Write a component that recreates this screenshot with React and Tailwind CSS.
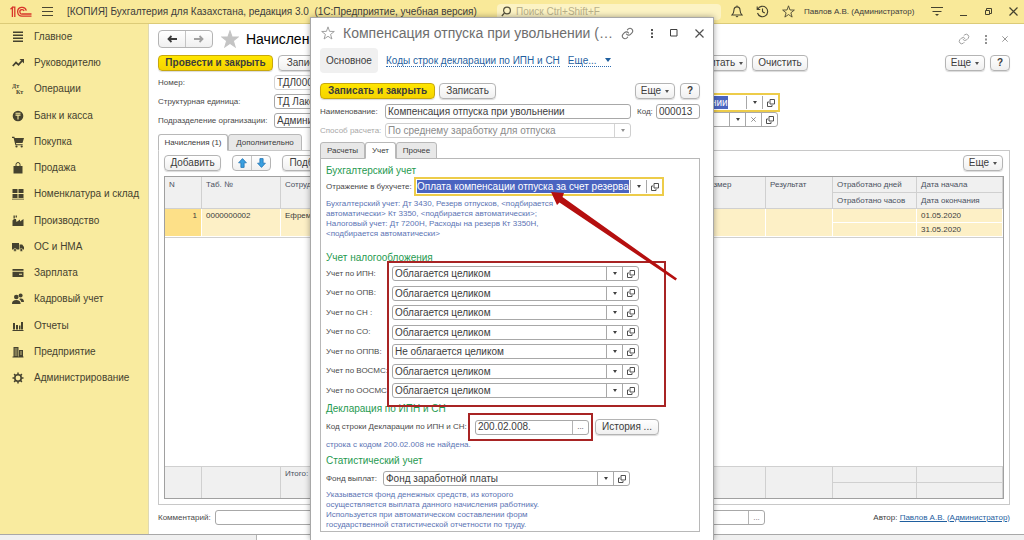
import React from "react";
import clsx from "clsx";

const MENU = [
  { label: "Главное", icon: "lines" },
  { label: "Руководителю", icon: "trend" },
  { label: "Операции", icon: "dtkt" },
  { label: "Банк и касса", icon: "coin" },
  { label: "Покупка", icon: "cart" },
  { label: "Продажа", icon: "bag" },
  { label: "Номенклатура и склад", icon: "blocks" },
  { label: "Производство", icon: "factory" },
  { label: "ОС и НМА", icon: "truck" },
  { label: "Зарплата", icon: "card" },
  { label: "Кадровый учет", icon: "people" },
  { label: "Отчеты", icon: "bars" },
  { label: "Предприятие", icon: "building" },
  { label: "Администрирование", icon: "gear" },
];

const TAXES = [
  { id: "ipn", label: "Учет по ИПН:", value: "Облагается целиком" },
  { id: "opv", label: "Учет по ОПВ:", value: "Облагается целиком" },
  { id: "sn", label: "Учет по СН :", value: "Облагается целиком" },
  { id: "so", label: "Учет по СО:", value: "Облагается целиком" },
  { id: "oppv", label: "Учет по ОППВ:", value: "Не облагается целиком" },
  { id: "vosmc", label: "Учет по ВОСМС:", value: "Облагается целиком" },
  { id: "oosmc", label: "Учет по ООСМС:", value: "Облагается целиком" },
];

export default function App() {
  return (
    <div className="relative flex h-screen flex-col overflow-hidden bg-white font-['Liberation_Sans',Arial,sans-serif] text-[10px] leading-3 text-[#3c3c3c]">
      <Header />
      <div className="flex min-h-0 flex-1">
        <Sidebar />
        <DocumentForm />
      </div>
      <div className="flex h-[6px] shrink-0 border-t border-[#a8a8a8] bg-[#f0f0f0]">
        <div className="ml-[256px] w-40 border-x border-[#b4b4b4] bg-white" />
      </div>
      <CalculationDialog />
    </div>
  );
}

function Header() {
  return (
    <header className="flex h-6 shrink-0 items-center border-b border-[#dccb78] bg-[#f9e999] pl-[10px] pr-[6px]">
      <Logo />
      <button type="button" aria-label="Меню" className="ml-[10px]">
        <svg width="12" height="10" viewBox="0 0 12 10" stroke="#4a4632" strokeWidth="1">
          <path d="M0 .5h11M0 4.500h11M0 8.500h11" />
        </svg>
      </button>
      <div className="ml-[13px] whitespace-pre">
        [КОПИЯ] Бухгалтерия для Казахстана, редакция 3.0{"  "}(1С:Предприятие, учебная версия)
      </div>
      <div className="ml-auto flex h-4 w-[224px] items-center gap-1 rounded-sm bg-[#fcf3c4] px-1">
        <svg width="11" height="11" viewBox="0 0 11 11" fill="none" stroke="#55513c" strokeWidth="1.2">
          <circle cx="6" cy="4.5" r="3.4" />
          <path d="M3.5 7 .8 10" />
        </svg>
        <input
          aria-label="Поиск"
          placeholder="Поиск Ctrl+Shift+F"
          className="min-w-0 flex-1 bg-transparent outline-none placeholder:text-[#b9b08a]"
        />
      </div>
      <div className="ml-[10px] flex items-center gap-[13px] text-[#45422f]">
        <button type="button" aria-label="Уведомления"><BellIcon /></button>
        <button type="button" aria-label="История"><HistoryIcon /></button>
        <button type="button" aria-label="Избранное"><StarIcon size={13} color="#45422f" /></button>
      </div>
      <div className="ml-[9px] w-[118px] whitespace-nowrap text-[8px]">Павлов А.В. (Администратор)</div>
      <div className="ml-[9px] flex items-center">
        <button type="button" aria-label="Настройки" className="mr-6">
          <svg width="12" height="11" viewBox="0 0 12 11" stroke="#45422f">
            <path d="M0 1.5h12M1.5 5.5h9" />
            <path d="M4 8h4L6 10z" fill="#45422f" stroke="none" />
          </svg>
        </button>
        <WindowButtons />
      </div>
    </header>
  );
}

function WindowButtons() {
  return (
    <div className="-ml-2 flex items-center gap-4">
      <button type="button" aria-label="Свернуть">
        <svg width="9" height="9" viewBox="0 0 9 9" stroke="#45422f"><path d="M1 8.5h7" /></svg>
      </button>
      <button type="button" aria-label="Восстановить">
        <svg width="9" height="9" viewBox="0 0 9 9" fill="none" stroke="#45422f">
          <path d="M2.500 3V1.500h5v5H6" />
          <path d="M1.500 3.500h4v4h-4z" />
        </svg>
      </button>
      <button type="button" aria-label="Закрыть">
        <CloseIcon size={9} color="#45422f" />
      </button>
    </div>
  );
}

function Sidebar() {
  return (
    <nav className="w-[149px] shrink-0 border-r border-[#dfd9b4] bg-[#f9eb9f]">
      {MENU.map((item, i) => (
        <a
          key={item.label}
          href="#"
          className={clsx("flex items-center gap-[10px] pl-3 text-[#45422f]", i % 4 === 3 ? "h-[27px]" : "h-[26px]")}
        >
          <MenuIcon name={item.icon} />
          {item.label}
        </a>
      ))}
    </nav>
  );
}

function DocumentForm() {
  return (
    <main className="flex min-w-0 flex-1 flex-col pl-[9px] pr-[14px] pt-[6px]">
      <div className="flex h-[18px] items-center">
        <div className="flex h-[18px] w-[55px] divide-x divide-[#c4c4c4] rounded-sm border border-[#b4b4b4] bg-linear-to-b from-white to-[#f0f0f0]">
          <button type="button" aria-label="Назад" className="flex flex-1 items-center justify-center">
            <ArrowIcon color="#3c3c3c" />
          </button>
          <button type="button" aria-label="Вперед" className="flex flex-1 items-center justify-center">
            <ArrowIcon color="#a0a0a0" flip />
          </button>
        </div>
        <button type="button" aria-label="В избранное" className="ml-2">
          <StarIcon size={18} color="#c4c4c4" fill="#c4c4c4" />
        </button>
        <h1 className="ml-[7px] whitespace-nowrap text-[14px] leading-4 text-black">Начисление</h1>
        <div className="ml-auto flex items-center gap-[15px] pr-[2px]">
          <button type="button" aria-label="Ссылка"><LinkIcon size={12} color="#a0a0a0" /></button>
          <button type="button" aria-label="Меню окна"><DotsIcon color="#909090" /></button>
          <button type="button" aria-label="Закрыть"><CloseIcon size={6} color="#808080" /></button>
        </div>
      </div>

      <div className="mt-[7px] flex justify-between">
        <div className="flex gap-[5px]">
          <Button primary className="w-[115px]">Провести и закрыть</Button>
          <Button className="w-[60px]">Записать</Button>
        </div>
        <div className="flex">
          <div className="mr-[137px] flex gap-[5px]">
            <Button menu className="w-[68px]">Рассчитать</Button>
            <Button className="w-[56px]">Очистить</Button>
          </div>
          <Button menu className="w-10">Еще</Button>
          <Button className="ml-[5px] w-5 font-bold">?</Button>
        </div>
      </div>

      <div className="mt-1 flex justify-between">
        <div className="flex flex-col gap-1">
          <Field id="number" label="Номер:" labelWidth="w-[116px]">
            <TextBox id="number" value="ТДЛ000001" className="w-[120px]" light />
          </Field>
          <Field id="unit" label="Структурная единица:" labelWidth="w-[116px]">
            <TextBox id="unit" value="ТД Лакомка" className="w-[180px]" />
          </Field>
          <Field id="dept" label="Подразделение организации:" labelWidth="w-[116px]">
            <TextBox id="dept" value="Администрация" className="w-[180px]" />
          </Field>
        </div>
        <div className="mr-[230px] mt-[18px] flex w-[129px] flex-col items-start">
          <ComboBox id="account" aria="Отражение в бухучете" value="при увольнении" selected className="w-full" />
          <ComboBox id="fund" aria="Вид" value="" clear className="w-[127px]" />
        </div>
      </div>

      <div className="mt-[6px] flex">
        <Tab active className="w-[70px]">Начисления (1)</Tab>
        <Tab className="w-[74px]">Дополнительно</Tab>
      </div>
      <section className="-mt-px flex min-h-0 flex-1 flex-col border border-[#c8c8c8] px-[5px] pb-[5px] pt-1">
        <div className="mb-[5px] flex justify-between pr-px">
          <div className="flex gap-[11px]">
            <Button className="w-[57px]">Добавить</Button>
            <div className="flex h-4 w-[39px] divide-x divide-[#c4c4c4] rounded-sm border border-[#b4b4b4] bg-linear-to-b from-white to-[#f0f0f0]">
              <button type="button" aria-label="Вверх" className="flex flex-1 items-center justify-center"><BlueArrow /></button>
              <button type="button" aria-label="Вниз" className="flex flex-1 items-center justify-center"><BlueArrow down /></button>
            </div>
            <Button className="w-[50px]">Подбор</Button>
          </div>
          <Button menu className="w-10">Еще</Button>
        </div>
        <AccrualTable />
      </section>

      <div className="flex h-[26px] shrink-0 items-center pb-px text-[8px]">
        <label htmlFor="comment" className="w-[57px] text-[#4a4a4a]">Комментарий:</label>
        <div className="flex h-[15px] w-[550px] rounded-[3px] border border-[#a8a8a8] bg-white">
          <input id="comment" className="min-w-0 flex-1 bg-transparent px-1 outline-none" />
          <button type="button" aria-label="Выбрать" className="w-4 border-l border-[#b4b4b4] text-[#707070]">...</button>
        </div>
        <div className="ml-auto whitespace-nowrap">
          Автор: <a href="#" className="text-[#1f5f9f] underline">Павлов А.В. (Администратор)</a>
        </div>
      </div>
      <div className="h-[3px] shrink-0" />
    </main>
  );
}

function AccrualTable() {
  const th = "border-r border-b border-[#d0d0d0] px-1 pt-[1px] text-left align-top font-normal text-[#4a5060]";
  const td = "border-r border-b border-white px-1 align-top";
  const tf = "border-r border-[#d0d0d0] px-1 align-top";
  return (
    <div className="min-h-0 flex-1 border border-[#a0a0a0]">
      <table className="h-full w-full table-fixed border-separate border-spacing-0 text-[8px] leading-[13px]">
        <colgroup>
          <col className="w-[37px]" />
          <col className="w-[79px]" />
          <col />
          <col className="w-[66px]" />
          <col className="w-[67px]" />
          <col className="w-[84px]" />
          <col className="w-[86px]" />
        </colgroup>
        <thead className="bg-[#f0f0f0]">
          <tr className="h-4">
            <th rowSpan={2} className={th}>N</th>
            <th rowSpan={2} className={th}>Таб. №</th>
            <th rowSpan={2} className={th}>Сотрудник</th>
            <th rowSpan={2} className={th}>Размер</th>
            <th rowSpan={2} className={th}>Результат</th>
            <th className={th}>Отработано дней</th>
            <th className={th}>Дата начала</th>
          </tr>
          <tr className="h-4">
            <th className={th}>Отработано часов</th>
            <th className={th}>Дата окончания</th>
          </tr>
        </thead>
        <tbody>
          <tr className="h-[14px] bg-[#fdf0c6]">
            <td rowSpan={2} className={clsx(td, "bg-[#fde088] text-right")}>1</td>
            <td rowSpan={2} className={td}>0000000002</td>
            <td rowSpan={2} className={td}>Ефремов</td>
            <td rowSpan={2} className={td} />
            <td rowSpan={2} className={td} />
            <td className={td} />
            <td className={td}>01.05.2020</td>
          </tr>
          <tr className="h-[14px] bg-[#fdf0c6]">
            <td className={td} />
            <td className={td}>31.05.2020</td>
          </tr>
          <tr>
            <td colSpan={7} className="border-y border-[#d0d0d0] bg-white" />
          </tr>
        </tbody>
        <tfoot className="bg-[#f0f0f0] text-[#4a5060]">
          <tr className="h-4">
            <td rowSpan={2} className={tf} />
            <td rowSpan={2} className={tf} />
            <td rowSpan={2} className={tf}>Итого:</td>
            <td rowSpan={2} className={tf} />
            <td rowSpan={2} className={tf} />
            <td className={clsx(tf, "border-b")} />
            <td className={clsx(tf, "border-b")} />
          </tr>
          <tr className="h-[15px]">
            <td className={tf} />
            <td className={tf} />
          </tr>
        </tfoot>
      </table>
    </div>
  );
}

function CalculationDialog() {
  return (
    <div
      role="dialog"
      aria-label="Компенсация отпуска при увольнении"
      className="absolute inset-x-0 bottom-0 top-[17px] mx-auto w-[404px] border-x border-t border-[#a8a8a8] bg-white pl-[9px] pr-[13px] shadow-[0_0_6px_rgba(0,0,0,0.35)]"
    >
      <div className="-mr-1 flex h-[30px] items-center pl-px">
        <button type="button" aria-label="В избранное"><StarIcon size={14} color="#9a9a9a" /></button>
        <h2 className="ml-2 whitespace-nowrap text-[14px] leading-4 text-[#6e6e6e]">
          Компенсация отпуска при увольнении (…
        </h2>
        <div className="ml-auto flex items-center gap-[17px]">
          <button type="button" aria-label="Ссылка"><LinkIcon size={13} color="#707070" /></button>
          <button type="button" aria-label="Меню окна"><DotsIcon color="#505050" /></button>
          <button type="button" aria-label="Развернуть">
            <svg width="8" height="8" viewBox="0 0 8 8" fill="none" stroke="#404040"><path d="M.5.500h6.500v6.500H.5z" /></svg>
          </button>
          <button type="button" aria-label="Закрыть"><CloseIcon size={9} color="#505050" /></button>
        </div>
      </div>

      <div className="flex h-[25px] items-center">
        <a href="#" className="flex h-full w-[58px] items-center justify-center rounded-sm bg-[#f0f0f0]">Основное</a>
        <a href="#" className="ml-2 whitespace-nowrap border-b border-dotted border-[#2f6cb0] leading-[11px] text-[#1f5f9f]">
          Коды строк декларации по ИПН и СН
        </a>
        <a href="#" className="ml-2 flex items-center gap-2 border-b border-dotted border-[#2f6cb0] leading-[11px] text-[#1f5f9f]">
          Еще...
          <svg width="6" height="4" viewBox="0 0 6 4" fill="#1f5f9f"><path d="M0 0h6L3 4z" /></svg>
        </a>
      </div>

      <div className="mt-[10px] flex justify-between">
        <div className="flex gap-1">
          <Button primary className="w-[115px]">Записать и закрыть</Button>
          <Button className="w-[57px]">Записать</Button>
        </div>
        <div className="flex gap-[5px]">
          <Button menu className="w-10">Еще</Button>
          <Button className="w-5 font-bold">?</Button>
        </div>
      </div>

      <div className="mt-[5px] flex justify-between">
        <Field id="title" label="Наименование:" labelWidth="w-[65px]">
          <TextBox id="title" value="Компенсация отпуска при увольнении" className="w-[246px]" />
        </Field>
        <Field id="code" label="Код:" labelWidth="w-[19px]">
          <TextBox id="code" value="000013" className="w-11" />
        </Field>
      </div>
      <div className="mt-1 text-[#9a9a9a]">
        <Field id="method" label="Способ расчета:" labelWidth="w-[65px]" muted>
          <div className="flex h-[15px] w-[246px] rounded-[3px] border border-[#cfcfcf]">
            <input id="method" defaultValue="По среднему заработку для отпуска" className="min-w-0 flex-1 px-[2px] text-[#8a8a8a] outline-none" />
            <button type="button" aria-label="Выбрать" className="flex w-4 items-center justify-center border-l border-[#d4d4d4]">
              <Caret color="#909090" />
            </button>
          </div>
        </Field>
      </div>

      <div className="mt-1 flex">
        <Tab className="w-[45px]">Расчеты</Tab>
        <Tab active className="w-[31px]">Учет</Tab>
        <Tab className="w-[41px]">Прочее</Tab>
      </div>
      <section className="-mt-px h-[374px] border border-[#b8b8b8] px-[5px] pt-[6px]">
        <GroupTitle>Бухгалтерский учет</GroupTitle>
        <div className="flex h-[19px] items-center">
          <label htmlFor="reflect" className="w-[88px] whitespace-nowrap text-[8px] text-[#4a4a4a]">Отражение в бухучете:</label>
          <ComboBox id="reflect" value="Оплата компенсации отпуска за счет резерва" selected className="w-[250px]" />
        </div>
        <p className="mt-[3px] w-60 text-[8px] leading-[10px] text-[#5b74b4]">
          Бухгалтерский учет: Дт 3430, Резерв отпусков, &lt;подбирается<br />
          автоматически&gt; Кт 3350, &lt;подбирается автоматически&gt;;<br />
          Налоговый учет: Дт 7200Н, Расходы на резерв Кт 3350Н,<br />
          &lt;подбирается автоматически&gt;
        </p>

        <GroupTitle className="mt-[13px]">Учет налогообложения</GroupTitle>
        <div className="relative mt-[2px] flex h-[132px] flex-col justify-between">
          {TAXES.map((t) => (
            <Field key={t.id} id={t.id} label={t.label} labelWidth="w-[66px]">
              <ComboBox id={t.id} value={t.value} className="w-[247px]" />
            </Field>
          ))}
          <div className="pointer-events-none absolute -top-[5px] left-[61px] h-[146px] w-[279px] border-2 border-[#a82424]" />
        </div>

        <GroupTitle className="mt-[5px]">Декларация по ИПН и СН</GroupTitle>
        <div className="relative mt-1 flex items-center">
          <label htmlFor="line" className="w-[149px] whitespace-nowrap text-[8px] text-[#4a4a4a]">Код строки Декларации по ИПН и СН:</label>
          <div className="flex h-[15px] w-[114px] rounded-[3px] border border-[#a8a8a8]">
            <input id="line" defaultValue="200.02.008." className="min-w-0 flex-1 px-[2px] outline-none" />
            <button type="button" aria-label="Выбрать" className="w-4 border-l border-[#b4b4b4] text-[8px]">...</button>
          </div>
          <Button className="ml-[6px] w-16">История ...</Button>
          <div className="pointer-events-none absolute -top-[6px] left-[142px] h-7 w-[125px] border-2 border-[#a82424]" />
        </div>
        <p className="mt-[5px] text-[8px] leading-[10px] text-[#5b74b4]">строка с кодом 200.02.008 не найдена.</p>

        <GroupTitle className="mt-[5px]">Статистический учет</GroupTitle>
        <div className="mt-1">
          <Field id="pay" label="Фонд выплат:" labelWidth="w-[57px]">
            <ComboBox id="pay" value="Фонд заработной платы" className="w-[247px]" />
          </Field>
        </div>
        <p className="mt-1 w-60 text-[8px] leading-[10px] text-[#5b74b4]">
          Указывается фонд денежных средств, из которого<br />
          осуществляется выплата данного начисления работнику.<br />
          Используется при автоматическом составлении форм<br />
          государственной статистической отчетности по труду.
        </p>
      </section>

      {/* red pointer to the reflection field */}
      <svg className="pointer-events-none absolute left-[239px] top-[172px]" width="130" height="94" viewBox="0 0 130 94" fill="#b50f0f">
        <path d="M1 2 14 3 12.500 7 127 88.500 125.500 90.500 9.500 12.500 7 15z" />
      </svg>
    </div>
  );
}

function Button({ children, primary, menu, className }) {
  return (
    <button
      type="button"
      className={clsx(
        "flex h-4 shrink-0 items-center justify-center gap-1 whitespace-nowrap rounded-sm border shadow-[0_1px_1px_rgba(0,0,0,0.15)]",
        primary
          ? "border-[#c8a80c] bg-linear-to-b from-[#ffe600] to-[#f5d400] font-bold"
          : "border-[#b4b4b4] bg-linear-to-b from-white to-[#f0f0f0]",
        className
      )}
    >
      {children}
      {menu && <Caret color="#505050" />}
    </button>
  );
}

function Tab({ children, active, className }) {
  return (
    <button
      type="button"
      className={clsx(
        "h-[17px] whitespace-nowrap rounded-t-[3px] border border-[#b8b8b8] text-[8px]",
        active ? "relative border-b-white bg-white" : "bg-[#e8e8e8]",
        className
      )}
    >
      {children}
    </button>
  );
}

function GroupTitle({ children, className }) {
  return <h3 className={clsx("leading-3 text-[#1f9a50]", className)}>{children}</h3>;
}

function Field({ id, label, labelWidth, muted, children }) {
  return (
    <div className="flex h-[15px] items-center">
      <label htmlFor={id} className={clsx("shrink-0 whitespace-nowrap text-[8px]", muted ? "text-[#a8a8a8]" : "text-[#4a4a4a]", labelWidth)}>
        {label}
      </label>
      {children}
    </div>
  );
}

function TextBox({ id, value, light, className }) {
  return (
    <input
      id={id}
      defaultValue={value}
      className={clsx(
        "h-[15px] rounded-[3px] border bg-white px-[2px] outline-none",
        light ? "border-[#d4d4d4]" : "border-[#a8a8a8]",
        className
      )}
    />
  );
}

function ComboBox({ id, value, aria, selected, clear, className }) {
  return (
    <div
      className={clsx(
        "flex bg-white",
        selected ? "h-[19px] shrink-0 border-2 border-[#edcc4a] py-px" : "h-[15px] rounded-[3px] border border-[#a8a8a8]",
        className
      )}
    >
      <div className={clsx("flex min-w-0 flex-1 items-center", selected ? "pl-px" : "px-[2px]")}>
        <input
          id={id}
          aria-label={aria}
          defaultValue={value}
          className={clsx("h-full min-w-0 outline-none", selected ? "field-sizing-content bg-[#4a64c0] text-white" : "w-full bg-transparent")}
        />
      </div>
      <button type="button" aria-label="Открыть список" className="flex w-4 shrink-0 items-center justify-center border-l border-[#a8a8a8]">
        <Caret color="#404040" />
      </button>
      {clear && (
        <button type="button" aria-label="Очистить" className="flex w-4 shrink-0 items-center justify-center border-l border-[#a8a8a8]">
          <CloseIcon size={5} color="#606060" />
        </button>
      )}
      <button type="button" aria-label="Открыть" className="flex w-4 shrink-0 items-center justify-center border-l border-[#a8a8a8]">
        <svg width="8" height="8" viewBox="0 0 8 8" fill="none" stroke="#505050">
          <path d="M3 .500h4.500v4.500H3z" />
          <path d="M2 3H.5v4.500h4.500V6" />
        </svg>
      </button>
    </div>
  );
}

function Caret({ color }) {
  return (
    <svg width="4" height="3" viewBox="0 0 4 3" fill={color} className="shrink-0">
      <path d="M0 0h4L2 3z" />
    </svg>
  );
}

function CloseIcon({ size, color }) {
  return (
    <svg width={size} height={size} viewBox="0 0 9 9" stroke={color} strokeWidth="1.2">
      <path d="M.5.500l8 8M8.500.500l-8 8" />
    </svg>
  );
}

function DotsIcon({ color }) {
  return (
    <svg width="2" height="9" viewBox="0 0 2 9" fill={color}>
      <path d="M0 0h2v2H0zM0 3.500h2v2H0zM0 7h2v2H0z" />
    </svg>
  );
}

function LinkIcon({ size, color }) {
  return (
    <svg width={size} height={size} viewBox="0 0 24 24" fill="none" stroke={color} strokeWidth="2" strokeLinecap="round">
      <path d="M10 13a5 5 0 0 0 7.500.500l3-3a5 5 0 0 0-7-7l-1.700 1.700" />
      <path d="M14 11a5 5 0 0 0-7.500-.500l-3 3a5 5 0 0 0 7 7l1.700-1.700" />
    </svg>
  );
}

function StarIcon({ size, color, fill = "none" }) {
  return (
    <svg width={size} height={size} viewBox="0 0 24 24" fill={fill} stroke={color} strokeWidth="1.600">
      <path d="M12 1.500l2.700 7.700 8.100.200-6.400 5 2.300 7.900L12 17.600l-6.700 4.700 2.300-7.900-6.400-5 8.100-.200z" />
    </svg>
  );
}

function ArrowIcon({ color, flip }) {
  return (
    <svg width="10" height="8" viewBox="0 0 10 8" fill="none" stroke={color} strokeWidth="1.800" className={clsx(flip && "-scale-x-100")}>
      <path d="M10 4H1.500M4.500 1l-3 3 3 3" />
    </svg>
  );
}

function BlueArrow({ down }) {
  return (
    <svg width="9" height="10" viewBox="0 0 9 10" fill="#3aa0e0" stroke="#1f74b4" strokeWidth=".8" className={clsx(down && "-scale-y-100")}>
      <path d="M4.500.600 8.400 4.800H6.100v4.600H2.900V4.800H.6z" />
    </svg>
  );
}

function BellIcon() {
  return (
    <svg width="12" height="13" viewBox="0 0 12 13" fill="none" stroke="currentColor" strokeWidth="1.100">
      <path d="M6 .500v1.200M1 10c1.500-1.300 1.800-2.500 1.900-4.500C3 3 4.200 1.900 6 1.900S9 3 9.100 5.500c.1 2 .4 3.200 1.900 4.500z" />
      <path d="M4.500 11h3L6 12.600z" fill="currentColor" stroke="none" />
    </svg>
  );
}

function HistoryIcon() {
  return (
    <svg width="13" height="13" viewBox="0 0 13 13" fill="none" stroke="currentColor" strokeWidth="1.100">
      <path d="M1.800 4.200a5.200 5.200 0 1 1-.3 3.800M1.200 1.500v3h3" />
      <path d="M6.500 3.500v3.300l2.300 1.300" />
    </svg>
  );
}

function Logo() {
  return (
    <svg width="22" height="12" viewBox="0 0 22 12" fill="none" stroke="#d8362a" strokeWidth="1.300">
      <path d="M.5 3.200 2.400 1.400V11M2.400 1.200h2.400V11" />
      <path d="M21.500 10.200h-9.300A4.400 4.400 0 1 1 16.300 4.600" />
      <path d="M21.500 8H12.400A2.200 2.200 0 1 1 14.100 5" />
    </svg>
  );
}

function MenuIcon({ name }) {
  return (
    <svg width="12" height="12" viewBox="0 0 12 12" fill="#45422f" className="shrink-0">
      {name === "lines" && <path d="M1 .500h10v1.500H1zM1 3.500h10V5H1zM1 6.500h10V8H1zM1 9.500h10V11H1z" />}
      {name === "trend" && (
        <>
          <path d="M.8 9 4 5.500l2.500 2.300L10 3.800" fill="none" stroke="#45422f" strokeWidth="1.800" />
          <path d="M7.500 2H12v4.500z" />
        </>
      )}
      {name === "dtkt" && (
        <g fontFamily="Liberation Serif, serif" fontSize="6" fontWeight="bold">
          <text x="0" y="5">Дт</text>
          <text x="4" y="11">Кт</text>
        </g>
      )}
      {name === "coin" && (
        <>
          <circle cx="6" cy="6" r="5.300" />
          <path d="M3.500 3.300h5M3.500 5.100h5M6 5v4.500" stroke="#f9eb9f" strokeWidth="1.100" />
        </>
      )}
      {name === "cart" && (
        <>
          <path d="M0 .800h2.300l.5 1.200H12L10.500 7H4l.3 1.200h6.400v1H3.400L1.600 2H0z" />
          <circle cx="4.500" cy="10.500" r="1.100" />
          <circle cx="9.700" cy="10.500" r="1.100" />
        </>
      )}
      {name === "bag" && (
        <>
          <path d="M1.500 4h9v7.500h-9z" />
          <path d="M4 5V2.500a2 2 0 0 1 4 0V5" fill="none" stroke="#45422f" />
        </>
      )}
      {name === "blocks" && <path d="M.5 1h5v4h-5zM6.500 1h5v4h-5zM.5 6h5v4h-5zM6.500 6h5v4h-5zM0 10.800h12v.8H0z" />}
      {name === "factory" && <path d="M.5 11V5.500L2 4h2l.5 3L8 4.500v2L11.500 4v7zM1.500.500h1.300v3H1.500zM3.600.500h1.300v2H3.600z" />}
      {name === "truck" && (
        <>
          <path d="M0 2h7v6.500H0zM7.600 3.500h2.600L12 6v2.500H7.600z" />
          <circle cx="3" cy="9" r="1.500" stroke="#f9eb9f" strokeWidth=".6" />
          <circle cx="9.300" cy="9" r="1.500" stroke="#f9eb9f" strokeWidth=".6" />
        </>
      )}
      {name === "card" && <path d="M.5 2h11v1.700H.5zM.5 4.800h11V10H.5zM7 6.800v.9h3v-.9z" fillRule="evenodd" />}
      {name === "people" && (
        <>
          <circle cx="4.300" cy="4" r="2.300" />
          <circle cx="8.600" cy="2.500" r="2" />
          <path d="M0 11c0-3 1.500-4 4.300-4s4.300 1 4.300 4zM7 6c3-1.200 5 0 5 3H9.300C9 7.500 8.200 6.700 7 6z" />
        </>
      )}
      {name === "bars" && <path d="M1 3h2v6.500H1zM4 5h2v4.500H4zM7 5.500h1.500v4H7zM9 2h2v7.500H9zM.5 10h11v1H.5z" />}
      {name === "building" && (
        <>
          <path d="M1.500 1h5v10h-5zM7 4h4v7H7zM.5 10.500h11v1H.5z" />
          <path d="M2.500 3h3M2.500 5h3M2.500 7h3M2.500 9h3M8 6h2M8 8h2" stroke="#f9eb9f" strokeWidth=".7" />
        </>
      )}
      {name === "gear" && (
        <g fill="none" stroke="#45422f">
          <circle cx="6" cy="6" r="3.200" strokeWidth="1.600" />
          <path d="M6 .5v2M6 9.500v2M.5 6h2M9.500 6h2M2.100 2.100l1.400 1.400M8.500 8.500l1.400 1.400M2.100 9.900l1.400-1.400M8.500 3.500l1.400-1.400" strokeWidth="1.500" />
        </g>
      )}
    </svg>
  );
}
